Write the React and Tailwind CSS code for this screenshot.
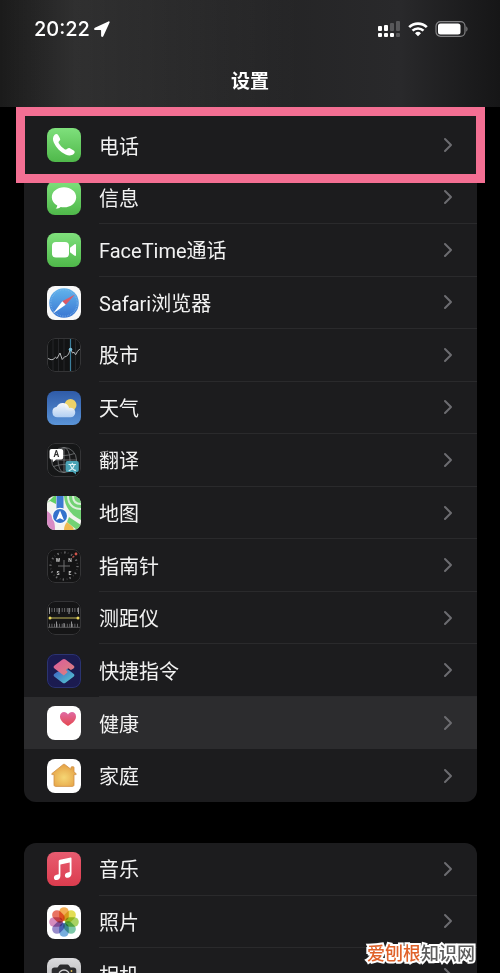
import { ChevronRight } from "lucide-react";

const mainApps = [
  { name: "电话", Icon: PhoneIcon, boxed: true },
  { name: "信息", Icon: MessagesIcon },
  { name: "FaceTime通话", Icon: FaceTimeIcon },
  { name: "Safari浏览器", Icon: SafariIcon },
  { name: "股市", Icon: StocksIcon },
  { name: "天气", Icon: WeatherIcon },
  { name: "翻译", Icon: TranslateIcon },
  { name: "地图", Icon: MapsIcon },
  { name: "指南针", Icon: CompassIcon },
  { name: "测距仪", Icon: MeasureIcon },
  { name: "快捷指令", Icon: ShortcutsIcon },
  { name: "健康", Icon: HealthIcon, active: true },
  { name: "家庭", Icon: HomeIcon },
];

const mediaApps = [
  { name: "音乐", Icon: MusicIcon },
  { name: "照片", Icon: PhotosIcon },
  { name: "相机", Icon: CameraIcon },
];

export default function App() {
  return (
    <div className="relative flex h-screen flex-col overflow-hidden bg-black font-[Roboto,'Noto_Sans_CJK_SC',sans-serif] text-[#f2f2f2]">
      <Header />
      <main className="min-h-0 flex-1 overflow-hidden pr-[23px] pl-6">
        <ul className="grid h-[695px] auto-rows-fr rounded-b-xl bg-[#1c1c1e] pt-3">
          {mainApps.map((app, i) => (
            <Row key={app.name} {...app} last={i === mainApps.length - 1} />
          ))}
        </ul>
        <ul className="mt-[41px] grid h-[158px] auto-rows-fr rounded-xl bg-[#1c1c1e]">
          {mediaApps.map((app, i) => (
            <Row key={app.name} {...app} last={i === mediaApps.length - 1} />
          ))}
        </ul>
      </main>
      {/* Watermark */}
      <p className="absolute right-[25px] bottom-[7px] text-[18px] leading-6 font-medium text-[#5c5c5c] [-webkit-text-stroke:4px_white] [paint-order:stroke_fill]">
        <span className="text-[#e0622a]">爱刨根</span>知识网
      </p>
    </div>
  );
}

function Header() {
  return (
    <header className="h-[107px] shrink-0 bg-linear-to-r from-[#1b1b1b] via-[#29292b] via-80% to-[#161617]">
      <div className="h-full bg-linear-to-r from-transparent via-white/8 via-15% to-transparent to-60%">
        <div className="flex items-center justify-between pt-[17px] pr-8 pl-[34px]">
          <div className="flex items-center gap-1 font-[Inter,sans-serif] text-[20px] leading-6 font-medium text-white">
            <span>20:22</span>
            <svg viewBox="0 0 16 16" className="size-4" fill="currentColor">
              <path d="M14.4.4.9 6.800c-1.200.6-.9 2.200.4 2.200H6.500c.4 0 .6.2.6.6v5.200c0 1.300 1.600 1.600 2.200.4L15.600 1.600c.4-.9-.4-1.600-1.200-1.200Z" />
            </svg>
          </div>
          <div className="flex items-center gap-[7px]">
            <SignalIcon />
            <WifiIcon />
            <BatteryIcon />
          </div>
        </div>
        <h1 className="pt-[29px] text-center text-[19px] leading-6 font-bold text-white">设置</h1>
      </div>
    </header>
  );
}

function Row({ name, Icon, boxed, active, last }) {
  return (
    <li className={active ? "relative bg-[#2c2c2e]" : "relative"}>
      <button className="flex h-full w-full items-center pl-[23px] text-left">
        <Icon />
        <span
          className={
            last || active || boxed
              ? "ml-[18px] flex h-full flex-1 items-center"
              : "ml-[18px] flex h-full flex-1 items-center border-b border-[#2a2a2c]"
          }
        >
          <span className="flex-1 pt-[3px] text-[20px] leading-6">{name}</span>
          <ChevronRight className="mr-[17px] size-6 text-[#6c6c70]" strokeWidth={2} />
        </span>
      </button>
      {boxed && (
        <div className="pointer-events-none absolute -inset-x-2 -top-3 -bottom-[11px] z-10 border-[9px] border-[#f36f93]" />
      )}
    </li>
  );
}

/* Status bar */

function SignalIcon() {
  return (
    <svg viewBox="0 0 24 18" className="h-[18px] w-6" fill="#fff">
      <rect x="1" y="6" width="4" height="5" rx="1" />
      <rect x="7" y="5" width="4" height="6" rx="1" />
      <rect x="13" y="3" width="4" height="8" rx="1" fill="#58585a" />
      <rect x="19" y="1" width="4" height="10" rx="1" fill="#58585a" />
      <rect x="1" y="13" width="4" height="4" rx="1" />
      <rect x="7" y="13" width="4" height="4" rx="1" />
      <rect x="13" y="13" width="4" height="4" rx="1" />
      <rect x="19" y="13" width="4" height="4" rx="1" fill="#58585a" />
    </svg>
  );
}

function WifiIcon() {
  return (
    <svg viewBox="0 0 20 16" className="h-4 w-5" fill="none" stroke="#fff" strokeWidth="2.6">
      <path d="M1.2 6.2a12.5 12.5 0 0 1 17.6 0" />
      <path d="M4.500 9.700a7.800 7.800 0 0 1 11 0" />
      <path d="M10 15.200 7 12.300a4.300 4.300 0 0 1 6 0Z" fill="#fff" stroke="none" />
    </svg>
  );
}

function BatteryIcon() {
  return (
    <svg viewBox="0 0 33 16" className="h-4 w-[33px]">
      <rect x="1" y=".7" width="29" height="14.6" rx="4.5" fill="none" stroke="#858587" strokeWidth="1.2" />
      <rect x="3" y="2.5" width="22.5" height="11" rx="2.5" fill="#fff" />
      <path d="M31.3 5.500c1.600.6 1.600 4.400 0 5Z" fill="#858587" />
    </svg>
  );
}

/* App icons, all drawn on a 34 x 34 tile */

function Tile({ fill, stroke, children }) {
  return (
    <svg viewBox="0 0 34 34" className="size-[34px] shrink-0 rounded-lg" aria-hidden="true">
      <rect width="34" height="34" fill={fill} />
      {children}
      {stroke && <rect x=".5" y=".5" width="33" height="33" rx="7.5" fill="none" stroke={stroke} />}
    </svg>
  );
}

function Fade({ id, from, to }) {
  return (
    <linearGradient id={id} x1="0" y1="0" x2="0" y2="1">
      <stop stopColor={from} />
      <stop offset="1" stopColor={to} />
    </linearGradient>
  );
}

function PhoneIcon() {
  return (
    <Tile fill="url(#phone)">
      <Fade id="phone" from="#7fe07c" to="#4fb84a" />
      <path
        d="M7.600 6.800c1-1.200 2.700-1.100 3.500.1l1.800 3.400c.5.9.4 1.600-.2 2.300l-.9 1c-.4.500-.4 1 0 1.600 1.600 2.500 3.500 4.500 6.200 6.200.6.300 1.100.3 1.500-.1l1.100-.9c.7-.6 1.500-.7 2.300-.2l3.800 2.200c1.100.7 1.300 2 .4 3-2.300 2.400-5.200 2.500-8.500 1C13 23.800 9.200 19.800 6.900 14.800 5.500 11.800 5.600 9 7.600 6.800Z"
        fill="#fff"
      />
    </Tile>
  );
}

function MessagesIcon() {
  return (
    <Tile fill="url(#messages)">
      <Fade id="messages" from="#7fe07c" to="#4fb84a" />
      <path
        d="M17 6.200c6.800 0 12.200 4.400 12.200 10S23.800 26.300 17 26.300c-1.200 0-2.300-.1-3.300-.4-1.400 1.200-3.200 1.800-5.100 1.700 1-.9 1.600-1.900 1.700-3.100-3.400-1.800-5.500-4.800-5.500-8.300 0-5.600 5.400-10 12.200-10Z"
        fill="#fff"
      />
    </Tile>
  );
}

function FaceTimeIcon() {
  return (
    <Tile fill="url(#facetime)">
      <Fade id="facetime" from="#7fe07c" to="#4fb84a" />
      <rect x="5" y="9" width="17" height="15.5" rx="4" fill="#fff" />
      <path d="m23 14.800 4.300-3.400c.9-.7 1.700-.4 1.700.7v9.800c0 1.100-.8 1.400-1.700.7L23 19.200Z" fill="#fff" />
    </Tile>
  );
}

function SafariIcon() {
  return (
    <Tile fill="#f8f8f8">
      <Fade id="safari" from="#62b4ec" to="#3a76d2" />
      <circle cx="17" cy="17" r="14.8" fill="url(#safari)" />
      <circle cx="17" cy="17" r="13.2" fill="none" stroke="#86b9ea" strokeWidth="1.2" strokeDasharray=".5 1.2" />
      <path d="M28 8.500 18.700 18.700l-3.400-3.400Z" fill="#dc5a68" />
      <path d="M6 27.500 15.300 15.300l3.400 3.400Z" fill="#fff" />
    </Tile>
  );
}

function StocksIcon() {
  return (
    <Tile fill="#121314" stroke="#343436">
      <path d="M6 0v34M11.500 0v34M17 0v34M28.500 0v34" stroke="#252629" strokeWidth="1" />
      <path d="M23.500 1v32" stroke="#3c7f9c" strokeWidth="1.2" />
      <path
        d="m1 20.500 3 1.200 2-.2 2.500-2.200 1.500 1.200 3-5.500 2.200 6.500 2.300-2.700 1.800-.3 2.300-2.500 1.900-5 2 4 1.500-.8 1.600 2.600 1.900-3.500 2.500-2.500"
        fill="none"
        stroke="#b4b6b8"
        strokeWidth="1"
      />
      <circle cx="23.500" cy="11.500" r="1.800" fill="#79bdd8" />
    </Tile>
  );
}

function WeatherIcon() {
  return (
    <Tile fill="url(#weather)">
      <Fade id="weather" from="#2f5ba8" to="#5a94d8" />
      <Fade id="cloud" from="#ffffff" to="#b8d4f5" />
      <circle cx="23.500" cy="14" r="6" fill="#ecd268" />
      <path
        d="M10.500 26.300a5.300 5.300 0 0 1-.8-10.500 6.700 6.700 0 0 1 12.500 1.100 4.800 4.800 0 1 1 .8 9.400Z"
        fill="url(#cloud)"
        fillOpacity=".94"
      />
    </Tile>
  );
}

function TranslateIcon() {
  return (
    <Tile fill="#161718" stroke="#343436">
      <g fill="none" stroke="#777a7c" strokeWidth=".8">
        <circle cx="17" cy="17" r="12.5" />
        <ellipse cx="17" cy="17" rx="6" ry="12.5" />
        <path d="M17 4.500v25M4.500 17h25M6.500 10.500q10.500 4 21 0M6.500 23.500q10.500-4 21 0" />
      </g>
      <path d="M4.500 6h9.700a2 2 0 0 1 2 2v6.500a2 2 0 0 1-2 2H9l-3.200 2.700v-2.700H4.500a2 2 0 0 1-2-2V8a2 2 0 0 1 2-2Z" fill="#fff" />
      <text x="9.300" y="14.300" textAnchor="middle" fontSize="8.500" fontWeight="700" fill="#333">
        A
      </text>
      <path d="M20.500 18h9.300a2 2 0 0 1 2 2v7a2 2 0 0 1-2 2H29v2.500L25.800 29h-5.300a2 2 0 0 1-2-2v-7a2 2 0 0 1 2-2Z" fill="#4aa3b5" />
      <text x="25.200" y="26.500" textAnchor="middle" fontSize="8" fontWeight="700" fill="#e4f4f7">
        文
      </text>
    </Tile>
  );
}

function MapsIcon() {
  return (
    <Tile fill="#f3f3ef">
      <path d="M0 7 7 0h2v8L3 5Z" fill="#62cf65" />
      <path d="M17 0h17v24C25 20 18 12 17 0Z" fill="#72d274" />
      <g fill="none" stroke="#dcefdc" strokeWidth="2">
        <path d="M21 0c0 8 5 13 13 13" />
        <path d="M26 0c0 5 3 8 8 8" />
      </g>
      <path d="M0 15c5 3 8 9 8 19H0Z" fill="#d88cc4" />
      <path d="M17 34c0-3 1-6 3-8l6 5 1 3Z" fill="#eeb950" />
      <path d="m22 21 12 8v5h-4l-10-8Z" fill="#72d274" />
      <path d="M9.500 0h7v17h-7Z" fill="#3c79d2" />
      <circle cx="13" cy="20" r="8.300" fill="#f8fafc" />
      <circle cx="13" cy="20" r="7" fill="#3472cc" />
      <path d="m13 14.500 4 9.800-4-2-4 2Z" fill="#fff" />
    </Tile>
  );
}

function CompassIcon() {
  return (
    <Tile fill="#141415" stroke="#343436">
      <circle cx="17" cy="17" r="13.5" fill="none" stroke="#8a8a8c" strokeWidth="2" strokeDasharray="1.2 5.86" />
      <circle cx="17" cy="17" r="13.5" fill="none" stroke="#4b4b4d" strokeWidth="1.5" strokeDasharray=".6 2.93" />
      <path d="M11 17h12M17 11v12" stroke="#6c6c6e" strokeWidth="1" />
      <g fontSize="5" fontWeight="700" fill="#d0d0d0" textAnchor="middle">
        <text x="11" y="12.500">W</text>
        <text x="23" y="12.500">N</text>
        <text x="11" y="25.500">S</text>
        <text x="23" y="25.500">E</text>
      </g>
      <path d="m25.500 8.500 1.500-1.500" stroke="#b84c44" strokeWidth="1.2" />
      <circle cx="29" cy="5" r="1.400" fill="#d0564c" />
    </Tile>
  );
}

function MeasureIcon() {
  return (
    <Tile fill="#151516" stroke="#343436">
      <path d="M2 9h30" stroke="#7b7b7d" strokeWidth="4" strokeDasharray=".8 1.75" />
      <path d="M2 24.500h30" stroke="#7b7b7d" strokeWidth="3.500" strokeDasharray=".8 1.75" />
      <path d="M2.500 6.500V13M12 7v6M22 7v6M31.500 6.500V13M9.500 20.500v6M17 22v4.500M24.500 20.500v6" stroke="#b0b0b2" strokeWidth=".8" />
      <path d="M1 26.300h32" stroke="#69696b" strokeWidth=".8" />
      <path d="M3 17h28" stroke="#c4b858" strokeWidth="1" />
      <circle cx="3" cy="17" r="1.500" fill="#ecd95c" />
      <circle cx="31" cy="17" r="1.500" fill="#ecd95c" />
    </Tile>
  );
}

function ShortcutsIcon() {
  return (
    <Tile fill="#1b1b50" stroke="#2b3470">
      <linearGradient id="shortcut-low" x1="0" y1="0" x2="1" y2="1">
        <stop stopColor="#3a58c0" />
        <stop offset="1" stopColor="#58d0d2" />
      </linearGradient>
      <linearGradient id="shortcut-top" x1="0" y1="0" x2="1" y2="1">
        <stop stopColor="#dc5a9c" />
        <stop offset="1" stopColor="#d8857c" />
      </linearGradient>
      <path d="m19 14 7.500 5.800c1.200.9 1.200 2 0 2.900l-8 6c-1 .7-2 .7-3 0l-8-6c-1.200-.9-1.200-2 0-2.900l2.500-1.900Z" fill="url(#shortcut-low)" />
      <path d="m15.500 5.500-8 6c-1.200.9-1.200 2 0 2.900l9.300 7 3.200-2.600c.7-.5.7-1.200 0-1.700l-1.200-1 2.600-1.900 2.500 1.700 2.600-1.500c1.200-.9 1.200-2 0-2.900l-8-6c-1-.7-2-.7-3 0Z" fill="url(#shortcut-top)" />
    </Tile>
  );
}

function HealthIcon() {
  return (
    <Tile fill="#fff">
      <Fade id="heart" from="#e06aa4" to="#e4484f" />
      <path d="M21 20c-5.600-3.500-8-6.200-8-9.600C13 7.700 14.900 6 17 6c1.700 0 3.200.9 4 2.500C21.800 6.900 23.300 6 25 6c2.100 0 4 1.700 4 4.400 0 3.400-2.400 6.100-8 9.600Z" fill="url(#heart)" />
    </Tile>
  );
}

function HomeIcon() {
  return (
    <Tile fill="#fff">
      <radialGradient id="house" cx=".5" cy=".6" r=".6">
        <stop stopColor="#f5d674" />
        <stop offset="1" stopColor="#e5a044" />
      </radialGradient>
      <path
        d="M16.200 5.500c.5-.4 1.100-.4 1.600 0l6.200 4.800V8.500c0-.5.3-.8.8-.8h1.400c.5 0 .8.3.8.8V13l2 1.500c.6.5.3 1.100-.3 1.100H27v10.200c0 1-.6 1.600-1.600 1.600H8.600c-1 0-1.600-.6-1.600-1.600V15.600H5.300c-.7 0-.9-.7-.3-1.100Z"
        fill="url(#house)"
        stroke="#cf9048"
        strokeWidth=".8"
      />
    </Tile>
  );
}

function MusicIcon() {
  return (
    <Tile fill="url(#music)">
      <Fade id="music" from="#e85c70" to="#db3c4e" />
      <path
        d="M23.800 5.600 13 7.800c-.8.2-1.300.7-1.300 1.500v12.900l-2.100.5c-1.700.4-2.700 1.500-2.700 3 0 1.700 1.400 2.700 3.200 2.300 2.200-.5 3.300-2 3.300-4.200V12.500l9.300-1.900v9.300l-2 .5c-1.800.4-2.800 1.500-2.800 3 0 1.700 1.500 2.700 3.200 2.300 2.200-.5 3.400-2 3.400-4.300V6.500c0-.7-.4-1.100-.7-.9Z"
        fill="#fff"
      />
    </Tile>
  );
}

const petals = ["#f2a23c", "#dfd93c", "#9ccc4c", "#6abf9c", "#64a2da", "#8a7cc4", "#cf7cb4", "#e5604c"];

function PhotosIcon() {
  return (
    <Tile fill="#fff">
      {petals.map((color, i) => (
        <rect
          key={color}
          x="12.2"
          y="2.2"
          width="9.6"
          height="13.8"
          rx="4.8"
          fill={color}
          fillOpacity=".88"
          className="mix-blend-multiply"
          transform={`rotate(${i * 45} 17 17)`}
        />
      ))}
    </Tile>
  );
}

function CameraIcon() {
  return (
    <Tile fill="url(#camera)">
      <Fade id="camera" from="#dcdcde" to="#a5a5a8" />
      <path d="M7.500 9.500h3l1.500-2c.4-.6 1-.9 1.700-.9h6.600c.7 0 1.300.3 1.700.9l1.500 2h3c1.700 0 2.800 1 2.800 2.700V24c0 1.700-1.100 2.700-2.800 2.700h-19c-1.700 0-2.800-1-2.800-2.700V12.200c0-1.700 1.100-2.700 2.800-2.700Z" fill="#2c2c2e" />
      <circle cx="17" cy="17.3" r="5.3" fill="none" stroke="#d0d0d2" strokeWidth="1.3" />
      <circle cx="24.500" cy="13" r=".9" fill="#e2c05a" />
    </Tile>
  );
}
